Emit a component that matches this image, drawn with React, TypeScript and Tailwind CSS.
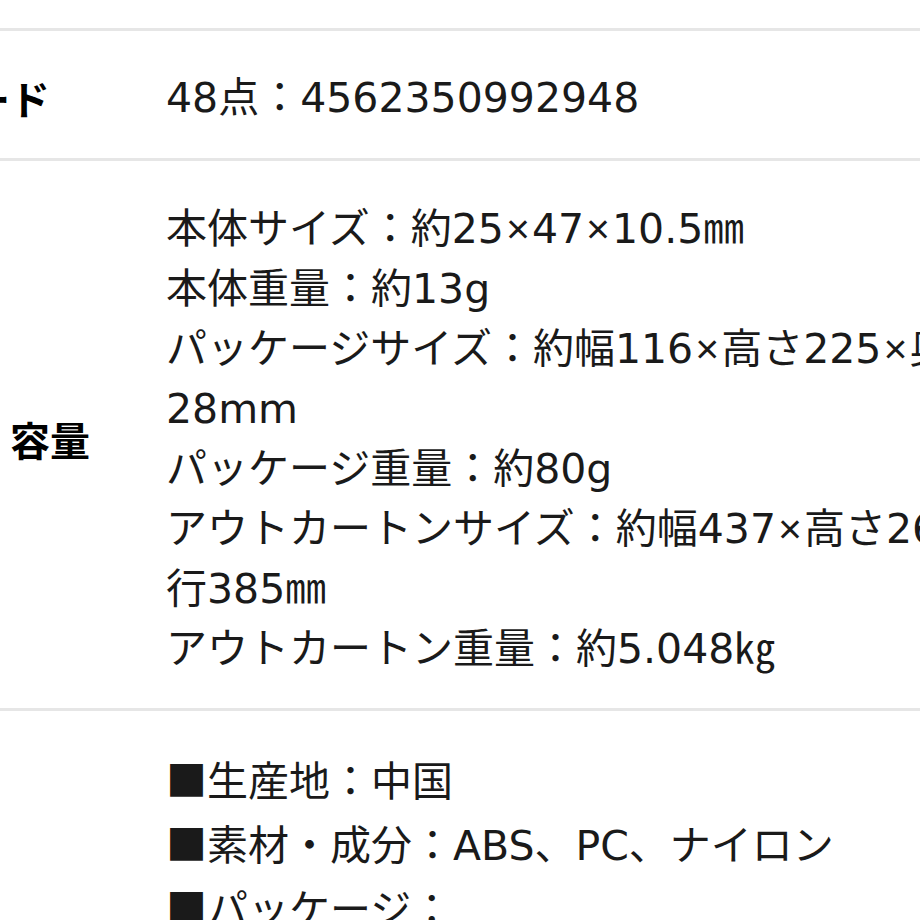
import React from "react";

const Divider = () => <div className="h-[3px] w-full bg-[#e6e6e6]" />;

// narrow multiplication sign, closer to the reference than DejaVu's
const X = () => <span className="px-[2px] font-['Liberation_Sans',sans-serif]">×</span>;
const Sq = () => <span className="font-['Noto_Sans_CJK_JP',sans-serif]">■</span>;

const SpecTable = () => {
  return (
    <div className="h-[920px] w-[920px] overflow-hidden bg-white font-['DejaVu_Sans','Noto_Sans_CJK_JP',sans-serif] text-[#1a1a1a]">
      <div className="h-[28px]" />
      <Divider />

      <div className="flex items-center pt-[37px] pb-[30px]">
        <div className="flex w-[166px] shrink-0 justify-end pr-[116px]">
          <span className="whitespace-nowrap font-['Noto_Sans_CJK_JP',sans-serif] text-[40px] leading-[60px] font-bold text-black">
            JANコード
          </span>
        </div>
        <div className="whitespace-nowrap text-[41px] leading-[60px]">48点：4562350992948</div>
      </div>
      <Divider />

      <div className="flex items-center pt-[38px] pb-[29px]">
        <div className="w-[166px] shrink-0 pl-[10px]">
          <span className="whitespace-nowrap font-['Noto_Sans_CJK_JP',sans-serif] text-[40px] leading-[60px] font-bold text-black">
            容量
          </span>
        </div>
        <div className="whitespace-nowrap text-[41px] leading-[60px]">
          <p>本体サイズ：約25<X />47<X />10.5㎜</p>
          <p>本体重量：約13g</p>
          <p>パッケージサイズ：約幅116<X />高さ225<X />奥行</p>
          <p>28mm</p>
          <p>パッケージ重量：約80g</p>
          <p>アウトカートンサイズ：約幅437<X />高さ262<X />奥</p>
          <p>行385㎜</p>
          <p>アウトカートン重量：約5.048㎏</p>
        </div>
      </div>
      <Divider />

      <div className="flex pt-[37px] pb-[30px]">
        <div className="w-[166px] shrink-0" />
        <div className="whitespace-nowrap text-[41px] leading-[60px]">
          <p><Sq />生産地：中国</p>
          <p><Sq />素材・成分：ABS、PC、ナイロン</p>
          <p><Sq />パッケージ：</p>
          <p>ブリスターパック</p>
        </div>
      </div>
    </div>
  );
};

export default function App() {
  return <SpecTable />;
}
